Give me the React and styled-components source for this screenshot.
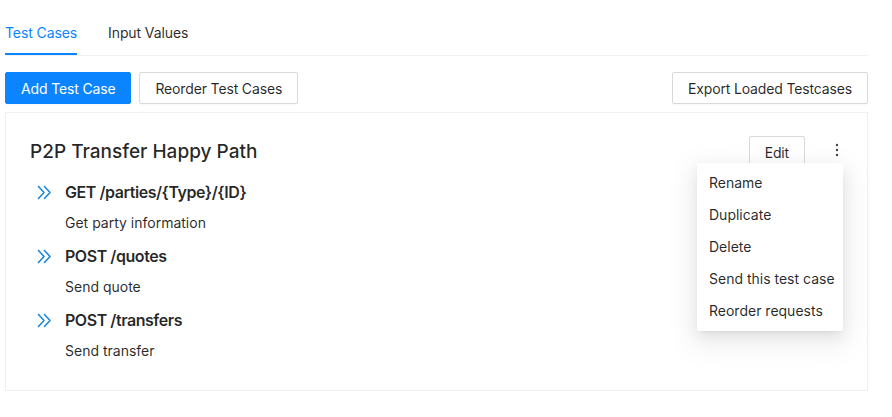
import React from "react";
import styled, { createGlobalStyle } from "styled-components";

const GlobalStyle = createGlobalStyle`
  body {
    margin: 0;
    background: #fff;
    font-family: Inter, "Noto Sans", sans-serif;
    color: rgba(0, 0, 0, 0.85);
    font-size: 14px;
  }
`;

const Page = styled.div`
  padding: 0 24px 0 5px;
`;

const TabNav = styled.div`
  display: flex;
  gap: 31px;
  border-bottom: 1px solid #f0f0f0;
`;

const Tab = styled.div`
  position: relative;
  padding: 22px 0 11px;
  line-height: 22px;
  font-size: 14px;
  letter-spacing: -0.1px;
  color: ${(p) => (p.$active ? "#0a84ff" : "rgba(0, 0, 0, 0.85)")};
  &::after {
    content: "";
    display: ${(p) => (p.$active ? "block" : "none")};
    position: absolute;
    left: 0;
    right: 0;
    bottom: 0;
    height: 2px;
    background: #0a84ff;
  }
`;

const Toolbar = styled.div`
  display: flex;
  justify-content: space-between;
  margin-top: 16px;
`;

const ButtonGroup = styled.div`
  display: flex;
  gap: 8px;
`;

const Button = styled.button`
  height: 32px;
  padding: 0 15px;
  font-family: inherit;
  font-size: 14px;
  letter-spacing: -0.15px;
  border-radius: 2px;
  border: 1px solid ${(p) => (p.$primary ? "#0a84ff" : "#d9d9d9")};
  background: ${(p) => (p.$primary ? "#0a84ff" : "#fff")};
  color: ${(p) => (p.$primary ? "#fff" : "rgba(0, 0, 0, 0.85)")};
  box-shadow: 0 2px 0 rgba(0, 0, 0, 0.016);
`;

const Card = styled.div`
  margin-top: 8px;
  border: 1px solid #f0f0f0;
  padding: 23px 24px 28px;
`;

const CardHeader = styled.div`
  display: flex;
  align-items: center;
  justify-content: space-between;
  height: 32px;
`;

const Title = styled.div`
  font-size: 19px;
  font-weight: 500;
  line-height: 28px;
`;

const Actions = styled.div`
  position: relative;
  display: flex;
  align-items: center;
`;

const Dots = styled.div`
  width: 12px;
  margin-left: 26px;
  display: flex;
  justify-content: center;
  margin-top: -4px;
`;

const Menu = styled.ul`
  position: absolute;
  top: calc(100% - 5px);
  right: 0;
  width: 146px;
  margin: 0;
  padding: 4px 0;
  list-style: none;
  background: #fff;
  border-radius: 2px;
  box-shadow: 0 3px 6px -4px rgba(0, 0, 0, 0.12),
    0 6px 16px 0 rgba(0, 0, 0, 0.08), 0 9px 28px 8px rgba(0, 0, 0, 0.05);
  z-index: 10;
`;

const MenuItem = styled.li`
  height: 32px;
  line-height: 32px;
  padding: 0 12px;
  font-size: 14px;
  white-space: nowrap;
`;

const Requests = styled.div`
  margin-top: 12px;
`;

const Request = styled.div`
  margin-bottom: 10px;
  &:last-child {
    margin-bottom: 0;
  }
`;

const RequestTitle = styled.div`
  display: flex;
  align-items: center;
  font-size: 16px;
  font-weight: 600;
  line-height: 24px;
  letter-spacing: -0.45px;
  svg {
    margin-left: 7px;
    margin-right: 13px;
  }
`;

const RequestDesc = styled.div`
  margin-top: 8px;
  padding-left: 35px;
  line-height: 22px;
`;

function DoubleRight() {
  return (
    <svg width="15" height="15" viewBox="0 0 15 15" fill="none">
      <path
        d="M1.5 1.5L7 7.5L1.5 13.5M7.5 1.5L13 7.5L7.5 13.5"
        stroke="#1d86d6"
        strokeWidth="1.6"
        strokeLinecap="round"
        strokeLinejoin="round"
      />
    </svg>
  );
}

function MoreIcon() {
  return (
    <svg width="4" height="14" viewBox="0 0 4 14">
      <circle cx="2" cy="2" r="1.2" fill="#444" />
      <circle cx="2" cy="7" r="1.2" fill="#444" />
      <circle cx="2" cy="12" r="1.2" fill="#444" />
    </svg>
  );
}

const requests = [
  { title: "GET /parties/{Type}/{ID}", desc: "Get party information" },
  { title: "POST /quotes", desc: "Send quote" },
  { title: "POST /transfers", desc: "Send transfer" },
];

const menuItems = [
  "Rename",
  "Duplicate",
  "Delete",
  "Send this test case",
  "Reorder requests",
];

export default function App() {
  return (
    <Page>
      <GlobalStyle />
      <TabNav>
        <Tab $active>Test Cases</Tab>
        <Tab>Input Values</Tab>
      </TabNav>
      <Toolbar>
        <ButtonGroup>
          <Button $primary>Add Test Case</Button>
          <Button>Reorder Test Cases</Button>
        </ButtonGroup>
        <Button>Export Loaded Testcases</Button>
      </Toolbar>
      <Card>
        <CardHeader>
          <Title>P2P Transfer Happy Path</Title>
          <Actions>
            <Button>Edit</Button>
            <Dots>
              <MoreIcon />
            </Dots>
            <Menu>
              {menuItems.map((m) => (
                <MenuItem key={m}>{m}</MenuItem>
              ))}
            </Menu>
          </Actions>
        </CardHeader>
        <Requests>
          {requests.map((r) => (
            <Request key={r.title}>
              <RequestTitle>
                <DoubleRight />
                {r.title}
              </RequestTitle>
              <RequestDesc>{r.desc}</RequestDesc>
            </Request>
          ))}
        </Requests>
      </Card>
    </Page>
  );
}
